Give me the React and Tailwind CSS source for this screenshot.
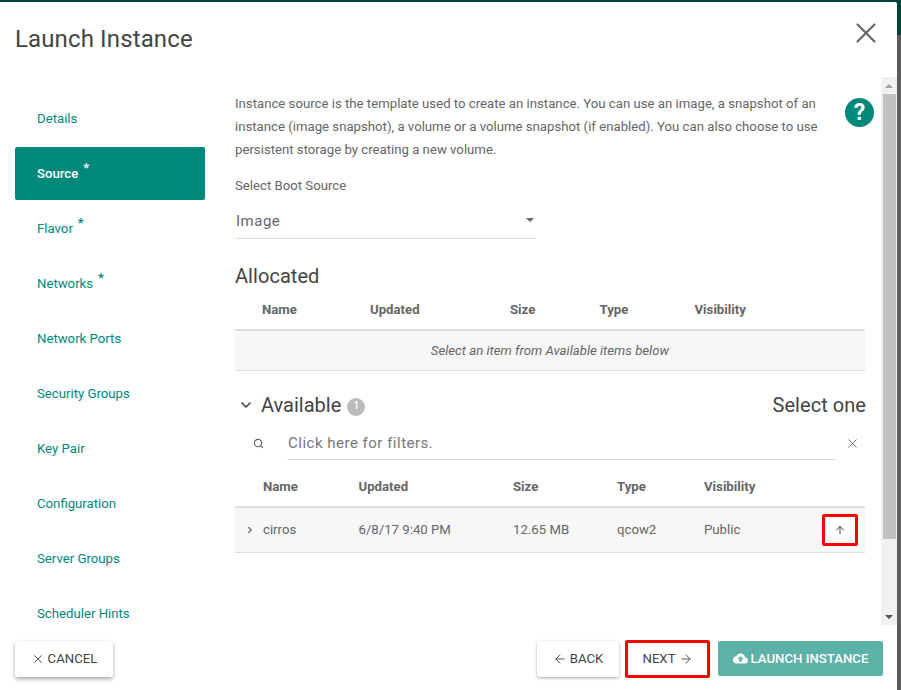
import React from 'react'
import { ArrowLeft, ArrowRight, ArrowUp, ChevronDown, ChevronRight, Search, X } from 'lucide-react'

const steps = [
  { label: 'Details' },
  { label: 'Source', required: true, active: true },
  { label: 'Flavor', required: true },
  { label: 'Networks', required: true },
  { label: 'Network Ports' },
  { label: 'Security Groups' },
  { label: 'Key Pair' },
  { label: 'Configuration' },
  { label: 'Server Groups' },
  { label: 'Scheduler Hints' },
]

const Step = ({ step }) => (
  <div
    className={`h-[53px] shrink-0 flex items-center pl-[22px] rounded-[2px] text-[13.2px] ${
      step.active ? 'bg-[#00897b] text-white font-medium' : 'text-[#00897b]'
    }`}
  >
    <span>{step.label}</span>
    {step.required && <span className="ml-[5px] -mt-[12px] text-[13px] font-bold leading-none">*</span>}
  </div>
)

const App = () => {
  return (
    <div className="w-[901px] h-[690px] overflow-hidden pt-[2px] bg-[linear-gradient(#00423a_0px,#00423a_35px,#5c5c5c_35px)] font-['Roboto',sans-serif] text-[#666666]">
      <div className="w-[897px] h-[688px] bg-white rounded-tr-[2px] flex flex-col">
        <div className="h-[75px] shrink-0 flex justify-between pl-[15px] pr-[14px]">
          <h1 className="mt-[21px] text-[24px] tracking-[0.13px] leading-[32px] text-[#444444]">Launch Instance</h1>
          <X className="mt-[14px] w-[34px] h-[34px] text-[#666666]" strokeWidth={1.5} />
        </div>

        <div className="h-[548px] shrink-0 flex">
          <div className="w-[190px] ml-[15px] mt-[15px] shrink-0 flex flex-col gap-[2px] overflow-hidden">
            {steps.map((step) => (
              <Step key={step.label} step={step} />
            ))}
          </div>

          <div className="flex-1 min-w-0 pl-[30px] pr-[16px] pt-[15px] overflow-hidden">
            <div className="flex">
              <p className="w-[600px] shrink-0 text-[13.2px] leading-[23px]">
                Instance source is the template used to create an instance. You can use an image, a snapshot of an
                instance (image snapshot), a volume or a volume snapshot (if enabled). You can also choose to use
                persistent storage by creating a new volume.
              </p>
              <div className="ml-[10px] mt-[6px] w-[29px] h-[29px] shrink-0 rounded-full bg-[#00897b] text-white flex items-center justify-center text-[23px] font-bold leading-none">
                ?
              </div>
            </div>

            <div className="mt-[16px] text-[13.2px] leading-[18px]">Select Boot Source</div>
            <div className="mt-[9px] w-[301px] h-[35px] border-b border-[#dddddd] flex items-center justify-between pl-[1px] pr-[2px] text-[15px] tracking-[0.5px]">
              <span>Image</span>
              <span className="mb-[2px] w-0 h-0 border-x-[4.5px] border-x-transparent border-t-[4.5px] border-t-[#666666]" />
            </div>

            <h2 className="mt-[24px] text-[20px] tracking-[0.05px] leading-[26px] text-[#444444]">Allocated</h2>
            <div className="h-[41px] mt-[1px] grid grid-cols-[135px_140px_89.5px_95px_1fr] items-center border-b-2 border-[#dddddd] text-[13.2px] font-bold pt-[1px]">
              <span className="pl-[27px]">Name</span>
              <span>Updated</span>
              <span>Size</span>
              <span>Type</span>
              <span>Visibility</span>
            </div>
            <div className="h-[40px] bg-[#f7f7f7] border-b border-[#dddddd] flex items-center justify-center text-[13.2px] italic">
              Select an item from Available items below
            </div>

            <div className="mt-[20px] h-[28px] flex items-center justify-between text-[#444444]">
              <div className="flex items-center">
                <ChevronDown className="ml-[3px] w-[16px] h-[16px]" strokeWidth={2.5} />
                <span className="ml-[7px] text-[20px]">Available</span>
                <span className="ml-[6px] mt-[3px] w-[18px] h-[18px] rounded-full bg-[#bbbbbb] text-white text-[11px] flex items-center justify-center font-medium">
                  1
                </span>
              </div>
              <span className="text-[20px] tracking-[0.05px] mr-[-1px]">Select one</span>
            </div>

            <div className="mt-[7px] h-[34px] flex items-center">
              <Search className="ml-[18px] w-[11px] h-[11px] shrink-0" strokeWidth={2.5} />
              <div className="ml-[23px] pl-[1px] pt-[1px] w-[549px] h-[34px] border-b border-[#dddddd] flex items-center text-[15px] text-[#777777] tracking-[0.5px]">
                Click here for filters.
              </div>
              <X className="ml-[9px] w-[15px] h-[15px] shrink-0" strokeWidth={1.5} />
            </div>

            <div className="h-[48px] pt-[8px] grid grid-cols-[123.5px_154.5px_104px_87px_1fr] items-center border-b-2 border-[#dddddd] text-[13.2px] font-bold">
              <span className="pl-[28px]">Name</span>
              <span>Updated</span>
              <span>Size</span>
              <span>Type</span>
              <span>Visibility</span>
            </div>
            <div className="h-[45px] bg-[#f7f7f7] border-b border-[#dddddd] grid grid-cols-[123.5px_154.5px_104px_87px_1fr] items-center text-[13.2px]">
              <span className="flex items-center">
                <ChevronRight className="ml-[10px] w-[10px] h-[10px]" strokeWidth={3} />
                <span className="ml-[8px]">cirros</span>
              </span>
              <span>6/8/17 9:40 PM</span>
              <span>12.65 MB</span>
              <span>qcow2</span>
              <span className="flex items-center justify-between pr-[7px]">
                Public
                <span className="w-[36px] h-[32px] border-[3px] border-[#ff0000] rounded-[2px] bg-white flex items-center justify-center">
                  <ArrowUp className="w-[12px] h-[12px] text-[#444444] mb-[1px]" strokeWidth={2} />
                </span>
              </span>
            </div>
          </div>

          <div className="w-[16px] shrink-0 bg-[#f1f1f1] flex flex-col items-center">
            <div className="h-[17px] flex items-center justify-center">
              <span className="w-0 h-0 border-x-[4px] border-x-transparent border-b-[4px] border-b-[#a3a3a3]" />
            </div>
            <div className="w-[13px] h-[445px] bg-[#c1c1c1]" />
            <div className="mt-auto h-[17px] flex items-center justify-center">
              <span className="w-0 h-0 border-x-[4px] border-x-transparent border-t-[4px] border-t-[#505050]" />
            </div>
          </div>
        </div>

        <div className="flex-1 flex items-start pt-[16px] pl-[15px] pr-[14px] text-[13.2px] text-[#444444]">
          <button className="h-[36px] w-[98px] bg-white rounded-[2px] shadow-[0_2px_4px_rgba(0,0,0,0.35)] flex items-center justify-center gap-[3px]">
            <X className="w-[14px] h-[14px]" strokeWidth={1.5} />
            CANCEL
          </button>
          <button className="ml-auto h-[36px] w-[82px] bg-white rounded-[2px] shadow-[0_1px_3px_rgba(0,0,0,0.35)] flex items-center justify-center gap-[3px]">
            <ArrowLeft className="w-[14px] h-[14px]" strokeWidth={1.5} />
            BACK
          </button>
          <button className="ml-[6px] -mt-[1px] h-[38px] w-[85px] bg-white border-[3px] border-[#ff0000] rounded-[2px] flex items-center justify-center gap-[3px]">
            NEXT
            <ArrowRight className="w-[14px] h-[14px]" strokeWidth={1.5} />
          </button>
          <button className="ml-[8px] h-[35px] w-[165px] bg-[#5cb2a7] text-white font-medium rounded-[2px] flex items-center justify-center gap-[3px]">
            <svg viewBox="0 0 24 24" className="w-[15px] h-[15px] fill-white">
              <path d="M19.35 10.04C18.67 6.59 15.64 4 12 4 9.11 4 6.6 5.64 5.35 8.04 2.34 8.36 0 10.91 0 14c0 3.31 2.69 6 6 6h13c2.76 0 5-2.24 5-5 0-2.64-2.05-4.78-4.65-4.96zM14 13v4h-4v-4H7l5-5 5 5h-3z" />
            </svg>
            LAUNCH INSTANCE
          </button>
        </div>
      </div>
    </div>
  )
}

export default App
